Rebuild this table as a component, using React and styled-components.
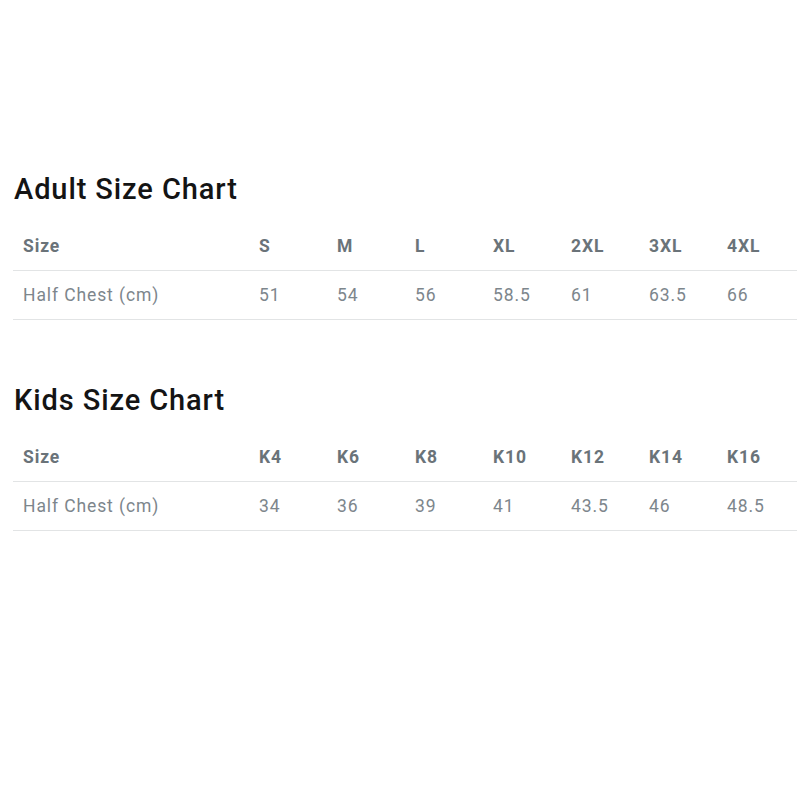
import React from 'react';
import styled, { createGlobalStyle } from 'styled-components';

const GlobalStyle = createGlobalStyle`
  body {
    margin: 0;
    background: #ffffff;
    font-family: Roboto, "Liberation Sans", sans-serif;
  }
`;

const Page = styled.div`
  padding: 172px 3px 0 13px;
`;

const Section = styled.section`
  margin-bottom: 63px;
`;

const Title = styled.h2`
  margin: 0 0 15px 1px;
  font-size: 29px;
  line-height: 34px;
  font-weight: 500;
  color: #141414;
  letter-spacing: 0.9px;
`;

const Row = styled.div`
  display: grid;
  grid-template-columns: 236px repeat(7, 78px);
  align-items: center;
  height: ${(p) => (p.$head ? '50px' : '49px')};
  border-bottom: 1px solid #e2e4e5;
  box-sizing: border-box;
`;

const Cell = styled.div`
  padding-left: 10px;
  font-size: 17.5px;
  letter-spacing: 0.9px;
  font-weight: ${(p) => (p.$head ? 700 : 400)};
  color: ${(p) => (p.$head ? '#6a7379' : '#7d868c')};
  white-space: nowrap;
`;

const charts = [
  {
    title: 'Adult Size Chart',
    sizes: ['S', 'M', 'L', 'XL', '2XL', '3XL', '4XL'],
    chest: ['51', '54', '56', '58.5', '61', '63.5', '66'],
  },
  {
    title: 'Kids Size Chart',
    sizes: ['K4', 'K6', 'K8', 'K10', 'K12', 'K14', 'K16'],
    chest: ['34', '36', '39', '41', '43.5', '46', '48.5'],
  },
];

function SizeChart({ title, sizes, chest }) {
  return (
    <Section>
      <Title>{title}</Title>
      <Row $head>
        <Cell $head>Size</Cell>
        {sizes.map((s) => (
          <Cell $head key={s}>
            {s}
          </Cell>
        ))}
      </Row>
      <Row>
        <Cell>Half Chest (cm)</Cell>
        {chest.map((c, i) => (
          <Cell key={i}>{c}</Cell>
        ))}
      </Row>
    </Section>
  );
}

export default function App() {
  return (
    <>
      <GlobalStyle />
      <Page>
        {charts.map((c) => (
          <SizeChart key={c.title} {...c} />
        ))}
      </Page>
    </>
  );
}
